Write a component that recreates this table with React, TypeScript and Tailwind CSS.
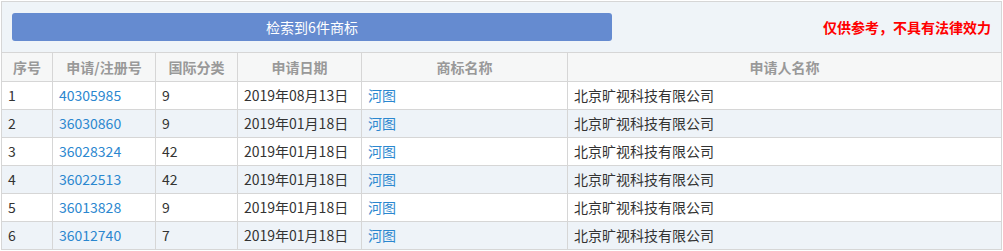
import React from 'react';

interface Mark {
    no: string;
    regNo: string;
    cls: string;
    date: string;
    name: string;
    applicant: string;
}

const marks: Mark[] = [
    {no: '1', regNo: '40305985', cls: '9', date: '2019年08月13日', name: '河图', applicant: '北京旷视科技有限公司'},
    {no: '2', regNo: '36030860', cls: '9', date: '2019年01月18日', name: '河图', applicant: '北京旷视科技有限公司'},
    {no: '3', regNo: '36028324', cls: '42', date: '2019年01月18日', name: '河图', applicant: '北京旷视科技有限公司'},
    {no: '4', regNo: '36022513', cls: '42', date: '2019年01月18日', name: '河图', applicant: '北京旷视科技有限公司'},
    {no: '5', regNo: '36013828', cls: '9', date: '2019年01月18日', name: '河图', applicant: '北京旷视科技有限公司'},
    {no: '6', regNo: '36012740', cls: '7', date: '2019年01月18日', name: '河图', applicant: '北京旷视科技有限公司'},
];

const headers = ['序号', '申请/注册号', '国际分类', '申请日期', '商标名称', '申请人名称'];

const cols = 'grid grid-cols-[51px_103px_82px_124px_206px_433px]';
const cell = 'flex items-center px-[6px] border-r border-[#d6d6d6] overflow-hidden whitespace-nowrap';

export default function App() {
    return (
        <div className="pl-px pt-px font-['Noto_Sans_CJK_SC','Noto_Sans',sans-serif] text-[14px]">
            <div className="w-[1001px] border border-[#d6d6d6]">
                <div className="h-[51px] bg-[#eff4f8] border-b border-[#d6d6d6] flex items-center pl-[10px] pr-[10px]">
                    <button className="w-[600px] h-[28px] rounded-[3px] bg-[#658bd0] text-white text-[14px]">
                        检索到6件商标
                    </button>
                    <span className="ml-auto text-[#ff0000] font-bold text-[14px]">仅供参考，不具有法律效力</span>
                </div>

                <div className={`${cols} h-[29px] bg-[#f6f7f7] border-b border-[#d6d6d6] text-[#999] font-bold`}>
                    {headers.map((h, i) => (
                        <div key={h} className={`${cell} justify-center ${i === 5 ? 'border-r-0' : ''}`}>{h}</div>
                    ))}
                </div>

                {marks.map((m, r) => (
                    <div
                        key={m.no}
                        className={`${cols} text-[#333] ${r % 2 === 1 ? 'bg-[#eef3f8]' : 'bg-white'} ${r === marks.length - 1 ? 'h-[27px]' : 'h-[28px] border-b border-[#d6d6d6]'}`}
                    >
                        <div className={cell}>{m.no}</div>
                        <div className={`${cell} text-[#2b87cf]`}>{m.regNo}</div>
                        <div className={cell}>{m.cls}</div>
                        <div className={cell}>{m.date}</div>
                        <div className={`${cell} text-[#2b87cf]`}>{m.name}</div>
                        <div className={`${cell} border-r-0`}>{m.applicant}</div>
                    </div>
                ))}
            </div>
        </div>
    );
}
